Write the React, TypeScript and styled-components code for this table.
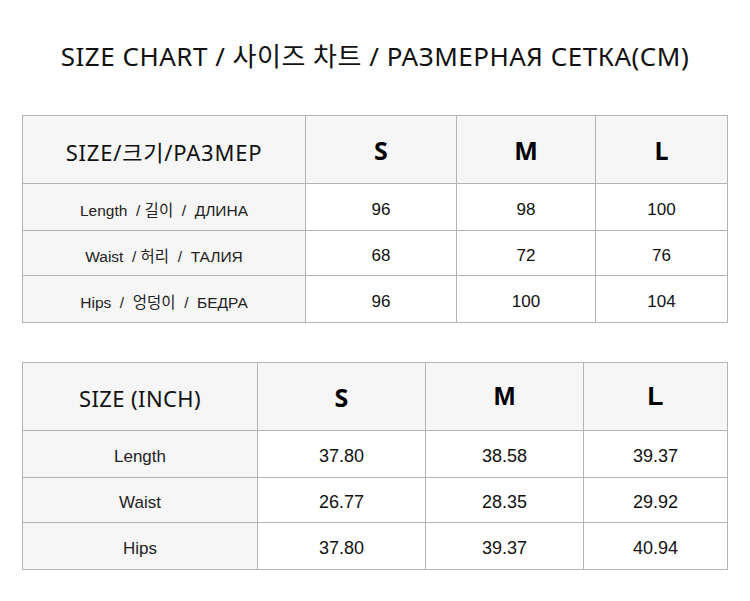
import React from "react";
import styled, { createGlobalStyle } from "styled-components";

const GlobalStyle = createGlobalStyle`
    body {
        margin: 0;
        background: #ffffff;
        font-family: "Liberation Sans", Arial, sans-serif;
        color: #111;
    }
`

const Page = styled.div`
    width: 750px;
    height: 601px;
    background: #fff;
    overflow: hidden;
`

const Title = styled.h1`
    margin: 0;
    height: 115px;
    display: flex;
    align-items: center;
    justify-content: center;
    padding-bottom: 5px;
    box-sizing: border-box;
    font-family: "Noto Sans", "Noto Sans CJK KR", sans-serif;
    font-weight: 400;
    font-size: 26px;
    letter-spacing: 0.5px;
    color: #111;
`

const Chart = styled.div<{ $cols: string; $gap?: number }>`
    display: grid;
    grid-template-columns: ${p => p.$cols};
    grid-template-rows: 68px 47px 45px 47px;
    width: 706px;
    margin: 0 0 ${p => p.$gap ?? 0}px 22px;
    box-sizing: border-box;
    border-left: 1px solid #b3b3b3;
    border-top: 1px solid #b3b3b3;
`

const Cell = styled.div<{ $shade?: boolean; $shift?: number }>`
    display: flex;
    align-items: center;
    justify-content: center;
    box-sizing: border-box;
    padding-top: ${p => p.$shift ?? 0}px;
    border-right: 1px solid #b3b3b3;
    border-bottom: 1px solid #b3b3b3;
    background: ${p => (p.$shade ? "#f6f6f6" : "#ffffff")};
    white-space: pre;
`

const CornerLabel = styled.span<{ $spacing: number }>`
    font-family: "Noto Sans", "Noto Sans CJK KR", sans-serif;
    font-size: 22px;
    color: #111;
    letter-spacing: ${p => p.$spacing}px;
`

const SizeLabel = styled.span<{ $arial?: boolean }>`
    font-family: ${p => (p.$arial ? '"Liberation Sans", Arial' : '"Noto Sans"')}, sans-serif;
    font-weight: 700;
    font-size: ${p => (p.$arial ? 26 : 25)}px;
    color: #000;
`

const RowLabel = styled.span<{ $big?: boolean }>`
    font-family: "Liberation Sans", Arial, "Noto Sans CJK KR", sans-serif;
    font-size: ${p => (p.$big ? 17 : 15.5)}px;
    color: #222;
`

const Value = styled.span<{ $big?: boolean }>`
    font-family: "Liberation Sans", Arial, sans-serif;
    font-size: ${p => (p.$big ? 18 : 17)}px;
    color: #111;
`

type Table = {
    cols: string
    corner: string
    cornerSpacing: number
    big: boolean
    labelShift: number
    valueShift: number
    rows: { label: string; values: string[] }[]
}

const cmChart: Table = {
    cols: "283px 151px 139px 132px",
    corner: "SIZE/크기/PA3MEP",
    cornerSpacing: 0.8,
    big: false,
    labelShift: 4,
    valueShift: 5,
    rows: [
        { label: "Length  / 길이  /  ДЛИНА", values: ["96", "98", "100"] },
        { label: "Waist  / 허리  /  ТАЛИЯ", values: ["68", "72", "76"] },
        { label: "Hips  /  엉덩이  /  БЕДРА", values: ["96", "100", "104"] },
    ],
}

const inchChart: Table = {
    cols: "235px 168px 158px 144px",
    corner: "SIZE (INCH)",
    cornerSpacing: 0.4,
    big: true,
    labelShift: 6,
    valueShift: 5,
    rows: [
        { label: "Length", values: ["37.80", "38.58", "39.37"] },
        { label: "Waist", values: ["26.77", "28.35", "29.92"] },
        { label: "Hips", values: ["37.80", "39.37", "40.94"] },
    ],
}

function SizeTable({ table, gap }: { table: Table; gap?: number }) {
    return (
        <Chart $cols={table.cols} $gap={gap}>
            <Cell $shade $shift={2}>
                <CornerLabel $spacing={table.cornerSpacing}>{table.corner}</CornerLabel>
            </Cell>
            {["S", "M", "L"].map(s => (
                <Cell $shade key={s}>
                    <SizeLabel $arial={table.big && s !== "S"}>{s}</SizeLabel>
                </Cell>
            ))}
            {table.rows.map(row => (
                <React.Fragment key={row.label}>
                    <Cell $shade $shift={table.labelShift}>
                        <RowLabel $big={table.big}>{row.label}</RowLabel>
                    </Cell>
                    {row.values.map((v, i) => (
                        <Cell key={i} $shift={table.valueShift}>
                            <Value $big={table.big}>{v}</Value>
                        </Cell>
                    ))}
                </React.Fragment>
            ))}
        </Chart>
    )
}

export default function App() {
    return (
        <Page>
            <GlobalStyle />
            <Title>SIZE CHART / 사이즈 차트 / РАЗМЕРНАЯ СЕТКА(CM)</Title>
            <SizeTable table={cmChart} gap={39} />
            <SizeTable table={inchChart} />
        </Page>
    )
}
